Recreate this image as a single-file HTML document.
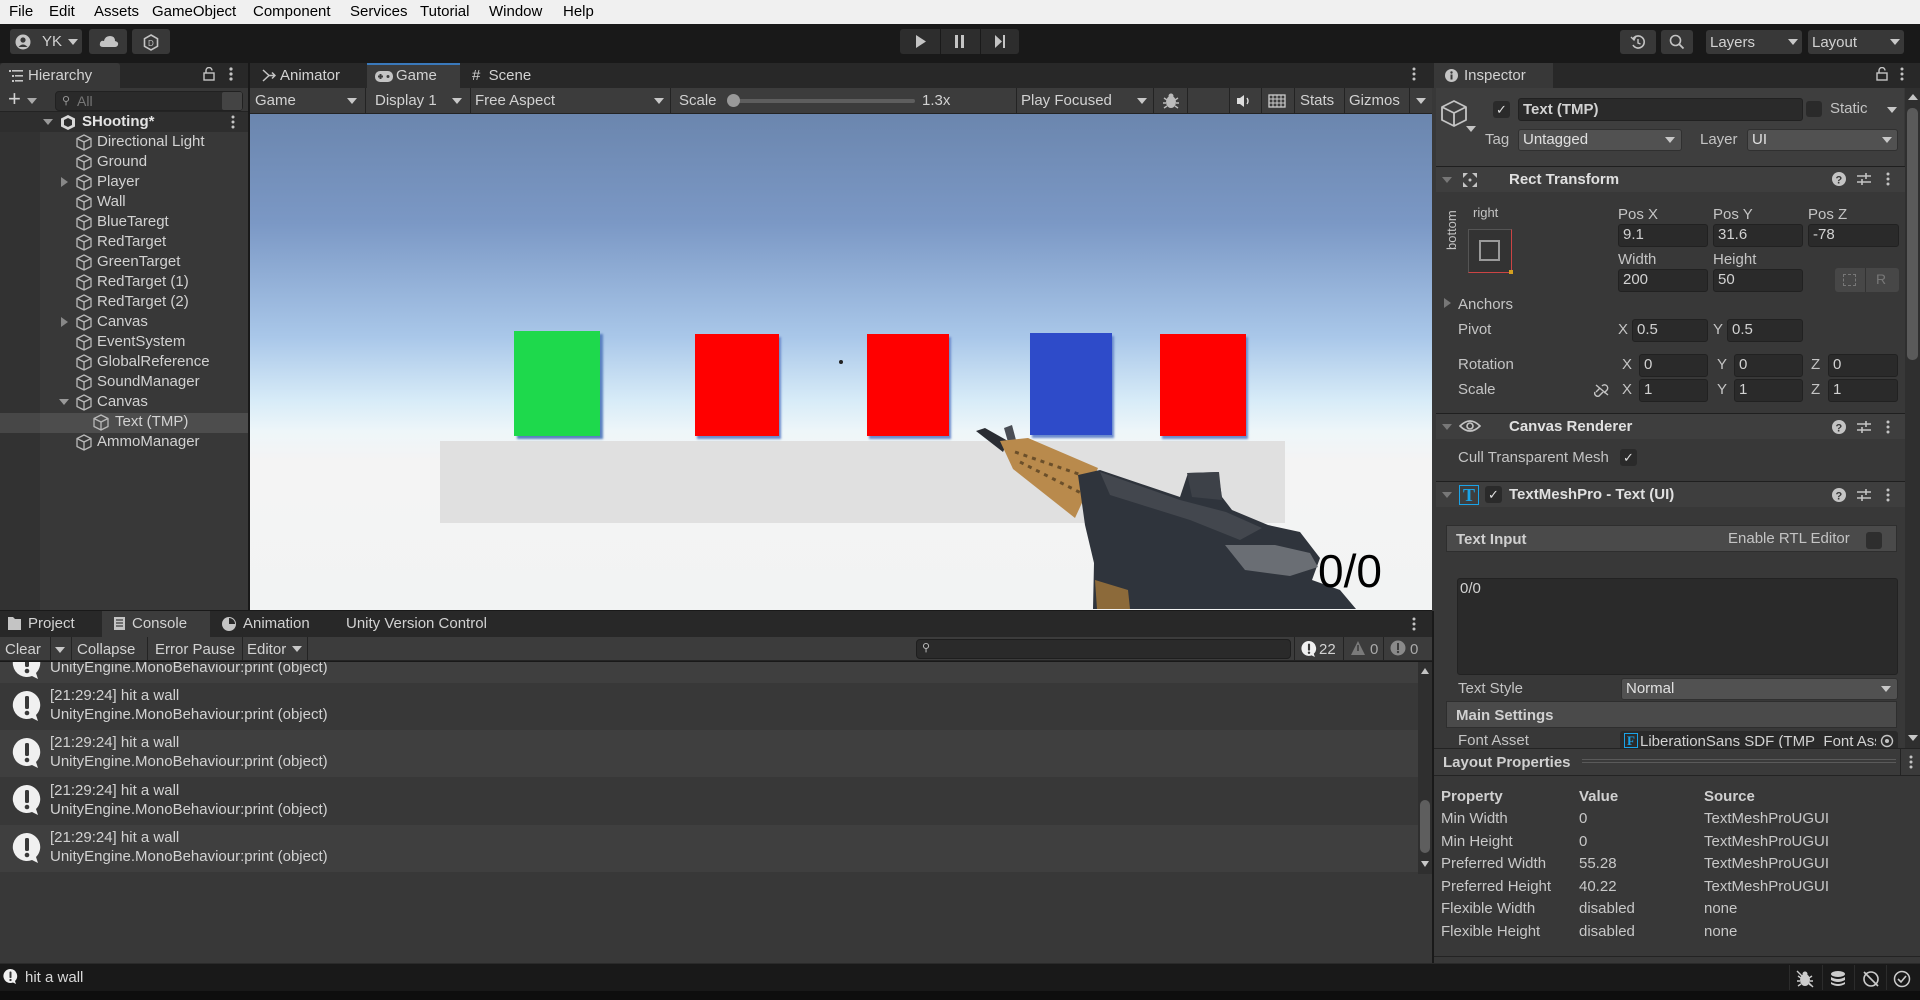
<!DOCTYPE html>
<html><head><meta charset="utf-8">
<style>
*{box-sizing:border-box;margin:0;padding:0}
body{width:1920px;height:1000px;overflow:hidden;background:#191919;font-family:"Liberation Sans",sans-serif;font-size:14px;color:#d2d2d2;position:relative}
.a{position:absolute;white-space:nowrap}
.menu{left:0;top:0;width:1920px;height:24px;background:#f0f0f0;color:#000;font-size:15px}
.menu span{position:absolute;top:3px}
.btn{position:absolute;background:#383838;border-radius:3px}
.tabrow{background:#282828}
.fld{position:absolute;background:#2a2a2a;border:1px solid #212121;border-radius:3px;padding-left:4px;line-height:20px;color:#d2d2d2}
.dd{position:absolute;background:#515151;border:1px solid #303030;border-radius:3px;padding-left:4px;line-height:20px;color:#e0e0e0}
.tri{position:absolute;width:0;height:0;border-left:5px solid transparent;border-right:5px solid transparent;border-top:6px solid #c8c8c8}
.sep{position:absolute;width:1px;background:#232323}
.hdr{position:absolute;left:1436px;width:1466px;height:26px;background:#3e3e3e;border-top:1px solid #1f1f1f}
.lbl{position:absolute;color:#c4c4c4}
</style></head><body>

<!-- menu -->
<div class="a menu">
<span style="left:9px">File</span><span style="left:49px">Edit</span><span style="left:94px">Assets</span><span style="left:152px">GameObject</span><span style="left:253px">Component</span><span style="left:350px">Services</span><span style="left:420px">Tutorial</span><span style="left:489px">Window</span><span style="left:563px">Help</span>
</div>

<!-- toolbar -->
<div class="btn" style="left:10px;top:29px;width:72px;height:25px"></div>
<svg class="a" style="left:15px;top:34px" width="16" height="16"><circle cx="8" cy="8" r="7.5" fill="#c4c4c4"/><circle cx="8" cy="6" r="2.6" fill="#383838"/><path d="M3.5 13 Q8 8 12.5 13" fill="#383838"/></svg>
<div class="a" style="left:42px;top:33px;font-size:15px">YK</div>
<div class="tri" style="left:68px;top:39px"></div>
<div class="btn" style="left:89px;top:29px;width:38px;height:25px"></div>
<svg class="a" style="left:99px;top:34px" width="20" height="14"><path d="M4 13 Q0 13 1 9 Q2 6 5 7 Q6 2 11 2 Q16 2 16 7 Q20 8 19 11 Q18 13 16 13Z" fill="#c4c4c4"/></svg>
<div class="btn" style="left:132px;top:29px;width:38px;height:25px"></div>
<svg class="a" style="left:143px;top:34px" width="16" height="17"><path d="M8 1 L14.5 4.7 L14.5 12.3 L8 16 L1.5 12.3 L1.5 4.7Z" fill="none" stroke="#c4c4c4" stroke-width="1.6"/><text x="5" y="12" font-size="8" fill="#c4c4c4" font-family="Liberation Sans">D</text></svg>

<div class="btn" style="left:900px;top:29px;width:119px;height:25px;background:#2d2d2d"></div>
<div class="sep" style="left:940px;top:29px;height:25px;background:#1a1a1a"></div>
<div class="sep" style="left:980px;top:29px;height:25px;background:#1a1a1a"></div>
<svg class="a" style="left:914px;top:34px" width="14" height="15"><path d="M2 1 L12 7.5 L2 14Z" fill="#c4c4c4"/></svg>
<svg class="a" style="left:953px;top:34px" width="14" height="15"><rect x="2" y="1" width="3" height="13" fill="#c4c4c4"/><rect x="8" y="1" width="3" height="13" fill="#c4c4c4"/></svg>
<svg class="a" style="left:993px;top:34px" width="14" height="15"><path d="M2 1 L9 7.5 L2 14Z" fill="#c4c4c4"/><rect x="10" y="1" width="2" height="13" fill="#c4c4c4"/></svg>

<div class="btn" style="left:1620px;top:30px;width:36px;height:24px"></div>
<svg class="a" style="left:1630px;top:34px" width="16" height="16"><path d="M3 5 A6 6 0 1 1 3 11" fill="none" stroke="#c4c4c4" stroke-width="1.6"/><path d="M1 3 L4 6 L6 2" fill="none" stroke="#c4c4c4" stroke-width="1.4"/><path d="M8 5 L8 9 L10.5 10" fill="none" stroke="#c4c4c4" stroke-width="1.4"/></svg>
<div class="btn" style="left:1661px;top:30px;width:32px;height:24px"></div>
<svg class="a" style="left:1669px;top:34px" width="16" height="16"><circle cx="6.5" cy="6.5" r="5" fill="none" stroke="#c4c4c4" stroke-width="1.6"/><path d="M10 10 L14.5 14.5" stroke="#c4c4c4" stroke-width="1.8"/></svg>
<div class="btn" style="left:1706px;top:30px;width:96px;height:24px"></div>
<div class="a" style="left:1710px;top:34px;font-size:15px">Layers</div><div class="tri" style="left:1788px;top:39px"></div>
<div class="btn" style="left:1808px;top:30px;width:96px;height:24px"></div>
<div class="a" style="left:1812px;top:34px;font-size:15px">Layout</div><div class="tri" style="left:1890px;top:39px"></div>

<!-- HIERARCHY -->
<div class="a tabrow" style="left:0;top:63px;width:248px;height:25px"></div>
<div class="a" style="left:0;top:63px;width:120px;height:25px;background:#383838;border-radius:3px 3px 0 0"></div>
<svg class="a" style="left:9px;top:70px" width="14" height="12"><g fill="#c4c4c4"><rect x="0" y="0" width="2" height="2"/><rect x="3" y="0" width="11" height="1.6"/><rect x="3" y="5" width="2" height="2"/><rect x="6" y="5" width="8" height="1.6"/><rect x="3" y="10" width="2" height="2"/><rect x="6" y="10" width="8" height="1.6"/></g></svg>
<div class="a" style="left:28px;top:67px;font-size:15px">Hierarchy</div>
<svg class="a" style="left:203px;top:67px" width="12" height="14"><rect x="1" y="6" width="10" height="7" fill="none" stroke="#c4c4c4" stroke-width="1.4"/><path d="M3 6 V3.5 A3 3 0 0 1 9 3.5" fill="none" stroke="#c4c4c4" stroke-width="1.4"/></svg>
<svg class="a" style="left:229px;top:67px" width="4" height="14"><circle cx="2" cy="2" r="1.6" fill="#c4c4c4"/><circle cx="2" cy="7" r="1.6" fill="#c4c4c4"/><circle cx="2" cy="12" r="1.6" fill="#c4c4c4"/></svg>
<div class="a" style="left:0;top:88px;width:248px;height:24px;background:#383838;border-bottom:1px solid #232323"></div>
<div class="a" style="left:8px;top:86px;font-size:22px;color:#d2d2d2">+</div><div class="tri" style="left:27px;top:98px;border-top-color:#aaa"></div>
<div class="a" style="left:55px;top:91px;width:188px;height:20px;background:#2a2a2a;border:1px solid #212121;border-radius:4px"></div>
<div class="a" style="left:62px;top:94px;font-size:11px;color:#999">&#9906;</div>
<div class="a" style="left:77px;top:93px;color:#777">All</div>
<div class="a" style="left:222px;top:92px;width:20px;height:18px;background:#444;border-radius:2px"></div>
<div class="a" style="left:0;top:112px;width:248px;height:498px;background:#383838"></div>
<div class="a" style="left:0;top:112px;width:248px;height:20px;background:#2e2e2e"></div>
<div class="a" style="left:0;top:132px;width:40px;height:478px;background:#323232"></div>
<div class="a" style="left:40px;top:413px;width:208px;height:20px;background:#4d4d4d"></div>
<div class="a" style="left:0;top:413px;width:40px;height:20px;background:#474747"></div>
<div class="tri" style="left:43px;top:119px;border-top-color:#999"></div>
<svg class="a" style="left:60px;top:114px" width="16" height="17"><path d="M8 1 L15 4.5 L15 12.5 L8 16 L1 12.5 L1 4.5Z" fill="#d8d8d8"/><path d="M8 4 L12 6 V11 L8 13 L4 11 V6Z" fill="#2e2e2e"/></svg>
<div class="a" style="left:82px;top:113px;font-size:15px;font-weight:bold;color:#e4e4e4">SHooting*</div>
<svg class="a" style="left:231px;top:115px" width="4" height="14"><circle cx="2" cy="2" r="1.5" fill="#c4c4c4"/><circle cx="2" cy="7" r="1.5" fill="#c4c4c4"/><circle cx="2" cy="12" r="1.5" fill="#c4c4c4"/></svg>

<svg width="0" height="0" style="position:absolute"><defs><symbol id="cube" viewBox="0 0 16 17"><path d="M8 1 L15 4.5 L15 12.5 L8 16 L1 12.5 L1 4.5Z M1 4.5 L8 8 L15 4.5 M8 8 V16" fill="none" stroke="#b8b8b8" stroke-width="1.3" stroke-linejoin="round"/></symbol>
<symbol id="msg" viewBox="0 0 30 32"><path d="M15 1 A14 14 0 1 0 20 28 L26 31 L24 25 A14 14 0 0 0 15 1Z" fill="#f0f0f0"/><rect x="13" y="6" width="4" height="13" rx="1.5" fill="#383838"/><circle cx="15" cy="23" r="2.3" fill="#383838"/></symbol></defs></svg>

<div id="hier"></div>
<!-- rows -->
<svg class="a" style="left:76px;top:134px" width="16" height="17"><use href="#cube"/></svg><div class="a" style="left:97px;top:133px;font-size:15px">Directional Light</div>
<svg class="a" style="left:76px;top:154px" width="16" height="17"><use href="#cube"/></svg><div class="a" style="left:97px;top:153px;font-size:15px">Ground</div>
<div class="a" style="left:61px;top:173px;width:0;height:0;border-top:5px solid transparent;border-bottom:5px solid transparent;border-left:7px solid #888;margin-top:4px"></div>
<svg class="a" style="left:76px;top:174px" width="16" height="17"><use href="#cube"/></svg><div class="a" style="left:97px;top:173px;font-size:15px">Player</div>
<svg class="a" style="left:76px;top:194px" width="16" height="17"><use href="#cube"/></svg><div class="a" style="left:97px;top:193px;font-size:15px">Wall</div>
<svg class="a" style="left:76px;top:214px" width="16" height="17"><use href="#cube"/></svg><div class="a" style="left:97px;top:213px;font-size:15px">BlueTaregt</div>
<svg class="a" style="left:76px;top:234px" width="16" height="17"><use href="#cube"/></svg><div class="a" style="left:97px;top:233px;font-size:15px">RedTarget</div>
<svg class="a" style="left:76px;top:254px" width="16" height="17"><use href="#cube"/></svg><div class="a" style="left:97px;top:253px;font-size:15px">GreenTarget</div>
<svg class="a" style="left:76px;top:274px" width="16" height="17"><use href="#cube"/></svg><div class="a" style="left:97px;top:273px;font-size:15px">RedTarget (1)</div>
<svg class="a" style="left:76px;top:294px" width="16" height="17"><use href="#cube"/></svg><div class="a" style="left:97px;top:293px;font-size:15px">RedTarget (2)</div>
<div class="a" style="left:61px;top:317px;width:0;height:0;border-top:5px solid transparent;border-bottom:5px solid transparent;border-left:7px solid #888"></div>
<svg class="a" style="left:76px;top:314px" width="16" height="17"><use href="#cube"/></svg><div class="a" style="left:97px;top:313px;font-size:15px">Canvas</div>
<svg class="a" style="left:76px;top:334px" width="16" height="17"><use href="#cube"/></svg><div class="a" style="left:97px;top:333px;font-size:15px">EventSystem</div>
<svg class="a" style="left:76px;top:354px" width="16" height="17"><use href="#cube"/></svg><div class="a" style="left:97px;top:353px;font-size:15px">GlobalReference</div>
<svg class="a" style="left:76px;top:374px" width="16" height="17"><use href="#cube"/></svg><div class="a" style="left:97px;top:373px;font-size:15px">SoundManager</div>
<div class="tri" style="left:59px;top:399px;border-top-color:#999"></div>
<svg class="a" style="left:76px;top:394px" width="16" height="17"><use href="#cube"/></svg><div class="a" style="left:97px;top:393px;font-size:15px">Canvas</div>
<svg class="a" style="left:93px;top:414px" width="16" height="17"><use href="#cube"/></svg><div class="a" style="left:115px;top:413px;font-size:15px">Text (TMP)</div>
<svg class="a" style="left:76px;top:434px" width="16" height="17"><use href="#cube"/></svg><div class="a" style="left:97px;top:433px;font-size:15px">AmmoManager</div>

<!-- GAME VIEW -->
<div class="a tabrow" style="left:250px;top:63px;width:1182px;height:25px"></div>
<svg class="a" style="left:262px;top:69px" width="14" height="13"><path d="M1 1 L7 6.5 L1 12 M7 6.5 H13 M10 3.5 L13 6.5 L10 9.5" fill="none" stroke="#c4c4c4" stroke-width="1.5"/></svg>
<div class="a" style="left:280px;top:67px;font-size:15px">Animator</div>
<div class="a" style="left:367px;top:63px;width:93px;height:25px;background:#3c3c3c;border-top:2px solid #3a79bb"></div>
<svg class="a" style="left:375px;top:71px" width="18" height="11"><rect x="0" y="0" width="18" height="11" rx="5" fill="#c4c4c4"/><rect x="3" y="4.5" width="5" height="2" fill="#3c3c3c"/><rect x="4.5" y="3" width="2" height="5" fill="#3c3c3c"/><circle cx="13" cy="5.5" r="1.5" fill="#3c3c3c"/></svg>
<div class="a" style="left:396px;top:67px;font-size:15px">Game</div>
<div class="a" style="left:472px;top:67px;font-size:15px">#&nbsp;&nbsp;Scene</div>
<svg class="a" style="left:1412px;top:67px" width="4" height="14"><circle cx="2" cy="2" r="1.5" fill="#c4c4c4"/><circle cx="2" cy="7" r="1.5" fill="#c4c4c4"/><circle cx="2" cy="12" r="1.5" fill="#c4c4c4"/></svg>
<div class="a" style="left:250px;top:88px;width:1182px;height:26px;background:#3c3c3c;border-bottom:1px solid #232323"></div>
<div class="a" style="left:255px;top:92px;font-size:15px">Game</div><div class="tri" style="left:347px;top:98px"></div>
<div class="sep" style="left:365px;top:88px;height:25px"></div>
<div class="a" style="left:375px;top:92px;font-size:15px">Display 1</div><div class="tri" style="left:452px;top:98px"></div>
<div class="sep" style="left:470px;top:88px;height:25px"></div>
<div class="a" style="left:475px;top:92px;font-size:15px">Free Aspect</div><div class="tri" style="left:654px;top:98px"></div>
<div class="sep" style="left:670px;top:88px;height:25px"></div>
<div class="a" style="left:679px;top:92px;font-size:15px">Scale</div>
<div class="a" style="left:735px;top:99px;width:180px;height:4px;background:#5e5e5e;border-radius:2px"></div>
<div class="a" style="left:727px;top:94px;width:13px;height:13px;background:#999;border-radius:50%"></div>
<div class="a" style="left:922px;top:92px;font-size:15px">1.3x</div>
<div class="sep" style="left:1016px;top:88px;height:25px"></div>
<div class="a" style="left:1021px;top:92px;font-size:15px">Play Focused</div><div class="tri" style="left:1137px;top:98px"></div>
<div class="sep" style="left:1153px;top:88px;height:25px"></div>
<svg class="a" style="left:1162px;top:92px" width="18" height="18"><ellipse cx="9" cy="10" rx="5" ry="6" fill="#bbb"/><circle cx="9" cy="4" r="2.5" fill="#bbb"/><path d="M2 6 L5 8 M16 6 L13 8 M1 11 H4 M17 11 H14 M2 16 L5 14 M16 16 L13 14" stroke="#bbb" stroke-width="1.4"/></svg>
<div class="sep" style="left:1187px;top:88px;height:25px"></div>
<div class="sep" style="left:1229px;top:88px;height:25px"></div>
<svg class="a" style="left:1236px;top:94px" width="16" height="14"><path d="M1 4 H4 L8 1 V13 L4 10 H1Z" fill="#ddd"/><path d="M11 4 Q13 7 11 10" fill="none" stroke="#ddd" stroke-width="1.4"/></svg>
<div class="sep" style="left:1261px;top:88px;height:25px"></div>
<svg class="a" style="left:1268px;top:94px" width="18" height="14"><rect x="1" y="1" width="16" height="12" fill="none" stroke="#ccc" stroke-width="1.3"/><path d="M1 5 H17 M1 9 H17 M5 1 V13 M9 1 V13 M13 1 V13" stroke="#ccc" stroke-width="1"/></svg>
<div class="sep" style="left:1294px;top:88px;height:25px"></div>
<div class="a" style="left:1300px;top:92px;font-size:15px">Stats</div>
<div class="sep" style="left:1344px;top:88px;height:25px"></div>
<div class="a" style="left:1349px;top:92px;font-size:15px">Gizmos</div>
<div class="sep" style="left:1409px;top:88px;height:25px"></div>
<div class="tri" style="left:1416px;top:98px"></div>

<!-- scene -->
<div class="a" style="left:250px;top:114px;width:1182px;height:496px;background:linear-gradient(#6b86ae 0%,#7b98c5 22%,#a9c7e9 45%,#d8ecf8 58%,#eef6f9 64%,#f4f4f4 70%,#f2f3f3 100%);overflow:hidden">
 <div class="a" style="left:190px;top:327px;width:845px;height:82px;background:#e0e0e0"></div>
 <div class="a" style="left:264px;top:217px;width:86px;height:105px;background:#1ed94c;box-shadow:3px 3px 2px #5a80c0"></div>
 <div class="a" style="left:445px;top:220px;width:84px;height:102px;background:#ff0000;box-shadow:2px 3px 2px #6a8acc"></div>
 <div class="a" style="left:617px;top:220px;width:82px;height:102px;background:#ff0000;box-shadow:2px 3px 2px #6a8acc"></div>
 <div class="a" style="left:780px;top:219px;width:82px;height:102px;background:#2e4bc9;box-shadow:2px 3px 2px #6a8acc"></div>
 <div class="a" style="left:910px;top:220px;width:86px;height:102px;background:#ff0000;box-shadow:2px 3px 2px #6a8acc"></div>
 <div class="a" style="left:589px;top:246px;width:4px;height:4px;background:#222;border-radius:50%"></div>
 <svg class="a" style="left:0;top:0" width="1182" height="496">
  <g transform="translate(-250,-114)">
   <path d="M976 431 L985 428 L1008 441 L1003 452Z" fill="#2a2d33"/>
   <path d="M1004 428 L1012 425 L1016 440 L1008 442Z" fill="#4a4e55"/>
   <path d="M1000 441 L1028 438 L1098 468 L1075 518 L1013 469Z" fill="#b98a4c"/>
   <path d="M1015 452 L1090 478 M1020 462 L1083 494" stroke="#6b4f2a" stroke-width="3" stroke-dasharray="4 5"/>
   <path d="M1078 475 L1100 470 L1180 497 L1188 473 L1218 472 L1222 497 L1232 510 L1268 525 L1300 532 L1320 558 L1312 580 L1340 590 L1356 609 L1093 609 L1094 563 L1085 525Z" fill="#2f343c"/>
   <path d="M1100 472 L1180 500 L1226 512 L1262 528 L1240 540 L1190 520 L1110 495Z" fill="#43474e"/>
   <path d="M1225 545 L1275 545 L1310 553 L1318 567 L1290 576 L1245 570Z" fill="#6a6e74"/>
   <path d="M1187 473 L1219 472 L1222 500 L1192 497Z" fill="#3d4148"/>
   <path d="M1095 580 L1128 590 L1130 609 L1097 609Z" fill="#8c6a3a"/>
  </g>
 </svg>
 <div class="a" style="left:1068px;top:430px;font-size:46px;color:#000">0/0</div>
</div>

<!-- INSPECTOR -->
<div class="a" style="left:1432px;top:63px;width:488px;height:902px;background:#383838"></div>
<div class="a tabrow" style="left:1432px;top:63px;width:488px;height:25px"></div>
<div class="a" style="left:1434px;top:63px;width:119px;height:25px;background:#383838"></div>
<svg class="a" style="left:1445px;top:69px" width="13" height="13"><circle cx="6.5" cy="6.5" r="6.5" fill="#c4c4c4"/><rect x="5.5" y="5.5" width="2" height="5" fill="#383838"/><circle cx="6.5" cy="3.5" r="1.2" fill="#383838"/></svg>
<div class="a" style="left:1464px;top:67px;font-size:15px">Inspector</div>
<svg class="a" style="left:1876px;top:67px" width="12" height="14"><rect x="1" y="6" width="10" height="7" fill="none" stroke="#c4c4c4" stroke-width="1.4"/><path d="M3 6 V3.5 A3 3 0 0 1 9 3.5" fill="none" stroke="#c4c4c4" stroke-width="1.4"/></svg>
<svg class="a" style="left:1900px;top:67px" width="4" height="14"><circle cx="2" cy="2" r="1.5" fill="#c4c4c4"/><circle cx="2" cy="7" r="1.5" fill="#c4c4c4"/><circle cx="2" cy="12" r="1.5" fill="#c4c4c4"/></svg>
<div class="a" style="left:1436px;top:88px;width:468px;height:78px;background:#3e3e3e"></div>
<svg class="a" style="left:1441px;top:99px" width="30" height="30"><path d="M13 2 L25 8 L25 21 L13 27 L1 21 L1 8Z M1 8 L13 14 L25 8 M13 14 V27" fill="none" stroke="#c4c4c4" stroke-width="1.8" stroke-linejoin="round"/></svg>
<div class="tri" style="left:1466px;top:126px;border-top-color:#c4c4c4"></div>
<div class="a" style="left:1493px;top:101px;width:17px;height:17px;background:#2a2a2a;border-radius:3px;color:#e0e0e0;font-size:13px;text-align:center;line-height:17px">&#10003;</div>
<div class="fld" style="left:1518px;top:98px;width:285px;height:23px;font-size:15px;font-weight:bold;line-height:21px">Text (TMP)</div>
<div class="a" style="left:1806px;top:101px;width:16px;height:16px;background:#2a2a2a;border-radius:3px"></div>
<div class="lbl" style="left:1830px;top:100px;font-size:15px">Static</div><div class="tri" style="left:1887px;top:107px"></div>
<div class="lbl" style="left:1485px;top:131px;font-size:15px">Tag</div>
<div class="dd" style="left:1518px;top:129px;width:164px;height:22px;font-size:15px">Untagged</div><div class="tri" style="left:1665px;top:137px"></div>
<div class="lbl" style="left:1700px;top:131px;font-size:15px">Layer</div>
<div class="dd" style="left:1747px;top:129px;width:151px;height:22px;font-size:15px">UI</div><div class="tri" style="left:1882px;top:137px"></div>

<div class="hdr" style="top:166px"></div>
<div class="tri" style="left:1442px;top:177px;border-top-color:#777"></div>
<svg class="a" style="left:1462px;top:172px" width="16" height="16"><g fill="#c4c4c4"><path d="M1 1 L6 1 L1 6Z"/><path d="M15 1 L10 1 L15 6Z"/><path d="M1 15 L6 15 L1 10Z"/><path d="M15 15 L10 15 L15 10Z"/><circle cx="8" cy="8" r="1.5"/></g></svg>
<div class="a" style="left:1509px;top:171px;font-size:15px;font-weight:bold;color:#e0e0e0">Rect Transform</div>
<svg class="a" style="left:1832px;top:172px" width="14" height="14"><circle cx="7" cy="7" r="7" fill="#c4c4c4"/><text x="3.5" y="11.5" font-size="11" font-weight="bold" fill="#383838" font-family="Liberation Sans">?</text></svg>
<svg class="a" style="left:1857px;top:172px" width="14" height="14"><path d="M0 4 H14 M0 10 H14 M9 1 V7 M5 7 V13" stroke="#c4c4c4" stroke-width="1.6"/></svg>
<svg class="a" style="left:1886px;top:172px" width="4" height="14"><circle cx="2" cy="2" r="1.5" fill="#c4c4c4"/><circle cx="2" cy="7" r="1.5" fill="#c4c4c4"/><circle cx="2" cy="12" r="1.5" fill="#c4c4c4"/></svg>

<div class="lbl" style="left:1473px;top:205px;font-size:13px">right</div>
<div class="lbl" style="left:1444px;top:250px;font-size:13px;transform:rotate(-90deg);transform-origin:left top">bottom</div>
<div class="a" style="left:1468px;top:229px;width:44px;height:44px;border:1px solid #555;border-right:1px solid #c44;border-bottom:1px solid #c44;background:#333"></div>
<div class="a" style="left:1479px;top:240px;width:21px;height:21px;border:2px solid #999"></div>
<div class="a" style="left:1509px;top:270px;width:4px;height:4px;background:#d4a020"></div>
<div class="lbl" style="left:1618px;top:206px;font-size:15px">Pos X</div>
<div class="lbl" style="left:1713px;top:206px;font-size:15px">Pos Y</div>
<div class="lbl" style="left:1808px;top:206px;font-size:15px">Pos Z</div>
<div class="fld" style="left:1618px;top:224px;width:90px;height:23px;font-size:15px">9.1</div>
<div class="fld" style="left:1713px;top:224px;width:90px;height:23px;font-size:15px">31.6</div>
<div class="fld" style="left:1808px;top:224px;width:91px;height:23px;font-size:15px">-78</div>
<div class="lbl" style="left:1618px;top:251px;font-size:15px">Width</div>
<div class="lbl" style="left:1713px;top:251px;font-size:15px">Height</div>
<div class="fld" style="left:1618px;top:269px;width:90px;height:23px;font-size:15px">200</div>
<div class="fld" style="left:1713px;top:269px;width:90px;height:23px;font-size:15px">50</div>
<div class="a" style="left:1835px;top:268px;width:64px;height:24px;background:#474747;border-radius:3px"></div>
<div class="a" style="left:1865px;top:268px;width:1px;height:24px;background:#333"></div>
<div class="a" style="left:1843px;top:274px;width:13px;height:12px;border:1px dashed #777"></div>
<div class="a" style="left:1876px;top:271px;font-size:14px;color:#777">R</div>
<div class="a" style="left:1444px;top:298px;width:0;height:0;border-top:5px solid transparent;border-bottom:5px solid transparent;border-left:7px solid #777"></div>
<div class="lbl" style="left:1458px;top:296px;font-size:15px">Anchors</div>
<div class="lbl" style="left:1458px;top:321px;font-size:15px">Pivot</div>
<div class="lbl" style="left:1618px;top:321px;font-size:15px">X</div>
<div class="fld" style="left:1632px;top:319px;width:76px;height:23px;font-size:15px">0.5</div>
<div class="lbl" style="left:1713px;top:321px;font-size:15px">Y</div>
<div class="fld" style="left:1727px;top:319px;width:76px;height:23px;font-size:15px">0.5</div>
<div class="lbl" style="left:1458px;top:356px;font-size:15px">Rotation</div>
<div class="lbl" style="left:1622px;top:356px;font-size:15px">X</div><div class="fld" style="left:1639px;top:354px;width:69px;height:23px;font-size:15px">0</div>
<div class="lbl" style="left:1717px;top:356px;font-size:15px">Y</div><div class="fld" style="left:1734px;top:354px;width:69px;height:23px;font-size:15px">0</div>
<div class="lbl" style="left:1811px;top:356px;font-size:15px">Z</div><div class="fld" style="left:1828px;top:354px;width:70px;height:23px;font-size:15px">0</div>
<div class="lbl" style="left:1458px;top:381px;font-size:15px">Scale</div>
<svg class="a" style="left:1594px;top:383px" width="16" height="14"><path d="M2 9 L6 5 M9 9 L5 13 A3 3 0 0 1 1 9 M8 3 A3 3 0 0 1 13 7 L10 10 M2 2 L14 12" fill="none" stroke="#c4c4c4" stroke-width="1.4"/></svg>
<div class="lbl" style="left:1622px;top:381px;font-size:15px">X</div><div class="fld" style="left:1639px;top:379px;width:69px;height:23px;font-size:15px">1</div>
<div class="lbl" style="left:1717px;top:381px;font-size:15px">Y</div><div class="fld" style="left:1734px;top:379px;width:69px;height:23px;font-size:15px">1</div>
<div class="lbl" style="left:1811px;top:381px;font-size:15px">Z</div><div class="fld" style="left:1828px;top:379px;width:70px;height:23px;font-size:15px">1</div>

<div class="hdr" style="top:413px"></div>
<div class="tri" style="left:1442px;top:424px;border-top-color:#777"></div>
<svg class="a" style="left:1459px;top:419px" width="22" height="14"><path d="M1 7 Q11 -3 21 7 Q11 17 1 7Z" fill="none" stroke="#c4c4c4" stroke-width="1.6"/><circle cx="11" cy="7" r="3" fill="none" stroke="#c4c4c4" stroke-width="1.6"/></svg>
<div class="a" style="left:1509px;top:418px;font-size:15px;font-weight:bold;color:#e0e0e0">Canvas Renderer</div>
<svg class="a" style="left:1832px;top:420px" width="14" height="14"><circle cx="7" cy="7" r="7" fill="#c4c4c4"/><text x="3.5" y="11.5" font-size="11" font-weight="bold" fill="#383838" font-family="Liberation Sans">?</text></svg>
<svg class="a" style="left:1857px;top:420px" width="14" height="14"><path d="M0 4 H14 M0 10 H14 M9 1 V7 M5 7 V13" stroke="#c4c4c4" stroke-width="1.6"/></svg>
<svg class="a" style="left:1886px;top:420px" width="4" height="14"><circle cx="2" cy="2" r="1.5" fill="#c4c4c4"/><circle cx="2" cy="7" r="1.5" fill="#c4c4c4"/><circle cx="2" cy="12" r="1.5" fill="#c4c4c4"/></svg>
<div class="lbl" style="left:1458px;top:449px;font-size:15px;width:160px;overflow:hidden">Cull Transparent Mesh</div>
<div class="a" style="left:1620px;top:449px;width:17px;height:17px;background:#2a2a2a;border-radius:3px;color:#e0e0e0;font-size:13px;text-align:center;line-height:17px">&#10003;</div>

<div class="hdr" style="top:481px"></div>
<div class="tri" style="left:1442px;top:492px;border-top-color:#777"></div>
<div class="a" style="left:1459px;top:485px;width:20px;height:20px;border:1px solid #1aa3e8;color:#1aa3e8;font-family:'Liberation Serif',serif;font-weight:bold;font-size:18px;text-align:center;line-height:19px">T</div>
<div class="a" style="left:1485px;top:486px;width:17px;height:17px;background:#2a2a2a;border-radius:3px;color:#e0e0e0;font-size:13px;text-align:center;line-height:17px">&#10003;</div>
<div class="a" style="left:1509px;top:486px;font-size:15px;font-weight:bold;color:#e0e0e0">TextMeshPro - Text (UI)</div>
<svg class="a" style="left:1832px;top:488px" width="14" height="14"><circle cx="7" cy="7" r="7" fill="#c4c4c4"/><text x="3.5" y="11.5" font-size="11" font-weight="bold" fill="#383838" font-family="Liberation Sans">?</text></svg>
<svg class="a" style="left:1857px;top:488px" width="14" height="14"><path d="M0 4 H14 M0 10 H14 M9 1 V7 M5 7 V13" stroke="#c4c4c4" stroke-width="1.6"/></svg>
<svg class="a" style="left:1886px;top:488px" width="4" height="14"><circle cx="2" cy="2" r="1.5" fill="#c4c4c4"/><circle cx="2" cy="7" r="1.5" fill="#c4c4c4"/><circle cx="2" cy="12" r="1.5" fill="#c4c4c4"/></svg>
<div class="a" style="left:1446px;top:525px;width:451px;height:27px;background:#4a4a4a;border:1px solid #2e2e2e"></div>
<div class="a" style="left:1456px;top:531px;font-size:15px;font-weight:bold;color:#d0d0d0">Text Input</div>
<div class="lbl" style="left:1728px;top:530px;font-size:15px">Enable RTL Editor</div>
<div class="a" style="left:1866px;top:532px;width:16px;height:17px;background:#2e2e2e;border-radius:3px"></div>
<div class="a" style="left:1457px;top:578px;width:441px;height:97px;background:#2a2a2a;border:1px solid #222;border-radius:3px"></div>
<div class="a" style="left:1460px;top:580px;font-size:15px">0/0</div>
<div class="lbl" style="left:1458px;top:680px;font-size:15px">Text Style</div>
<div class="dd" style="left:1621px;top:678px;width:277px;height:22px;font-size:15px">Normal</div><div class="tri" style="left:1881px;top:686px"></div>
<div class="a" style="left:1446px;top:701px;width:451px;height:27px;background:#4a4a4a;border:1px solid #2e2e2e"></div>
<div class="a" style="left:1456px;top:707px;font-size:15px;font-weight:bold;color:#d0d0d0">Main Settings</div>
<div class="a" style="left:1436px;top:730px;width:468px;height:18px;overflow:hidden">
 <div class="lbl" style="left:22px;top:2px;font-size:15px">Font Asset</div>
 <div class="a" style="left:184px;top:1px;width:278px;height:22px;background:#2a2a2a;border-radius:3px"></div>
 <div class="a" style="left:188px;top:3px;width:14px;height:15px;border:1px solid #1aa3e8;color:#1aa3e8;font-family:'Liberation Serif',serif;font-weight:bold;font-size:13px;line-height:13px;text-align:center">F</div>
 <div class="a" style="left:204px;top:3px;font-size:15px;width:236px;overflow:hidden">LiberationSans SDF (TMP_Font Asset)</div>
 <svg class="a" style="left:444px;top:4px" width="14" height="14"><circle cx="7" cy="7" r="5.5" fill="none" stroke="#c4c4c4" stroke-width="1.4"/><circle cx="7" cy="7" r="2" fill="#c4c4c4"/></svg>
</div>
<div class="a" style="left:1905px;top:88px;width:15px;height:660px;background:#2f2f2f"></div>
<div class="a" style="left:1907px;top:108px;width:11px;height:252px;background:#5a5a5a;border-radius:5px"></div>
<div class="a" style="left:1908px;top:94px;width:0;height:0;border-left:5px solid transparent;border-right:5px solid transparent;border-bottom:6px solid #c4c4c4"></div>
<div class="tri" style="left:1908px;top:735px"></div>
<!-- layout properties -->
<div class="a" style="left:1434px;top:748px;width:486px;height:28px;background:#3a3a3a;border-top:1px solid #232323;border-bottom:1px solid #232323"></div>
<div class="a" style="left:1443px;top:754px;font-size:15px;font-weight:bold;color:#d0d0d0">Layout Properties</div>
<div class="a" style="left:1582px;top:759px;width:314px;height:4px;border-top:1px solid #5a5a5a;border-bottom:1px solid #5a5a5a"></div>
<div class="a" style="left:1900px;top:748px;width:1px;height:28px;background:#232323"></div>
<svg class="a" style="left:1909px;top:755px" width="4" height="14"><circle cx="2" cy="2" r="1.5" fill="#c4c4c4"/><circle cx="2" cy="7" r="1.5" fill="#c4c4c4"/><circle cx="2" cy="12" r="1.5" fill="#c4c4c4"/></svg>
<div class="a" style="left:1434px;top:777px;width:486px;height:180px;background:#383838"></div>
<div class="a" style="left:1441px;top:785px;font-size:15px;font-weight:bold;line-height:23px;color:#d0d0d0">Property</div>
<div class="a" style="left:1579px;top:785px;font-size:15px;font-weight:bold;line-height:23px;color:#d0d0d0">Value</div>
<div class="a" style="left:1704px;top:785px;font-size:15px;font-weight:bold;line-height:23px;color:#d0d0d0">Source</div>
<div class="a" style="left:1441px;top:808px;font-size:15px;line-height:22.5px;color:#c8c8c8">Min Width<br>Min Height<br>Preferred Width<br>Preferred Height<br>Flexible Width<br>Flexible Height</div>
<div class="a" style="left:1579px;top:808px;font-size:15px;line-height:22.5px;color:#c8c8c8">0<br>0<br>55.28<br>40.22<br>disabled<br>disabled</div>
<div class="a" style="left:1704px;top:808px;font-size:15px;line-height:22.5px;color:#c8c8c8">TextMeshProUGUI<br>TextMeshProUGUI<br>TextMeshProUGUI<br>TextMeshProUGUI<br>none<br>none</div>
<div class="a" style="left:1434px;top:956px;width:486px;height:8px;background:#383838;border-top:1px solid #232323"></div>

<!-- BOTTOM CONSOLE -->
<div class="a tabrow" style="left:0;top:611px;width:1432px;height:26px"></div>
<svg class="a" style="left:8px;top:617px" width="13" height="13"><path d="M0 0 H5 L7 2 H13 V13 H0Z" fill="#c4c4c4"/></svg>
<div class="a" style="left:28px;top:615px;font-size:15px">Project</div>
<div class="a" style="left:102px;top:611px;width:108px;height:26px;background:#3c3c3c"></div>
<svg class="a" style="left:114px;top:617px" width="11" height="13"><rect x="0" y="0" width="11" height="13" fill="#c4c4c4"/><path d="M2 3 H9 M2 6 H9 M2 9 H9" stroke="#3c3c3c" stroke-width="1.2"/></svg>
<div class="a" style="left:132px;top:615px;font-size:15px">Console</div>
<svg class="a" style="left:222px;top:617px" width="14" height="14"><circle cx="7" cy="7" r="7" fill="#c4c4c4"/><path d="M7 7 V1 A6 6 0 0 1 13 7Z" fill="#282828"/></svg>
<div class="a" style="left:243px;top:615px;font-size:15px">Animation</div>
<div class="a" style="left:346px;top:615px;font-size:15px">Unity Version Control</div>
<svg class="a" style="left:1412px;top:617px" width="4" height="14"><circle cx="2" cy="2" r="1.5" fill="#c4c4c4"/><circle cx="2" cy="7" r="1.5" fill="#c4c4c4"/><circle cx="2" cy="12" r="1.5" fill="#c4c4c4"/></svg>
<div class="a" style="left:0;top:637px;width:1432px;height:24px;background:#3c3c3c;border-bottom:1px solid #232323"></div>
<div class="a" style="left:5px;top:641px;font-size:15px">Clear</div>
<div class="sep" style="left:50px;top:637px;height:24px"></div><div class="tri" style="left:55px;top:647px"></div>
<div class="sep" style="left:71px;top:637px;height:24px"></div>
<div class="a" style="left:77px;top:641px;font-size:15px">Collapse</div>
<div class="sep" style="left:147px;top:637px;height:24px"></div>
<div class="a" style="left:155px;top:641px;font-size:15px">Error Pause</div>
<div class="sep" style="left:242px;top:637px;height:24px"></div>
<div class="a" style="left:247px;top:641px;font-size:15px">Editor</div><div class="tri" style="left:292px;top:646px"></div>
<div class="sep" style="left:307px;top:637px;height:24px"></div>
<div class="a" style="left:916px;top:639px;width:375px;height:20px;background:#2a2a2a;border:1px solid #1e1e1e;border-radius:4px"></div>
<div class="a" style="left:922px;top:641px;font-size:11px;color:#bbb">&#9906;</div>
<div class="sep" style="left:1294px;top:637px;height:24px"></div>
<svg class="a" style="left:1301px;top:640px" width="16" height="18"><use href="#msg"/></svg>
<div class="a" style="left:1319px;top:641px;font-size:15px">22</div>
<div class="sep" style="left:1343px;top:637px;height:24px"></div>
<svg class="a" style="left:1350px;top:640px" width="16" height="16"><path d="M8 1 L15 15 H1Z" fill="#7a7a7a"/><rect x="7.2" y="5" width="1.6" height="6" fill="#3c3c3c"/></svg>
<div class="a" style="left:1370px;top:641px;font-size:15px;color:#aaa">0</div>
<div class="sep" style="left:1383px;top:637px;height:24px"></div>
<svg class="a" style="left:1390px;top:640px" width="16" height="16"><circle cx="8" cy="8" r="7.5" fill="#8a8a8a"/><rect x="7" y="3" width="2" height="7" fill="#3c3c3c"/><circle cx="8" cy="12" r="1.2" fill="#3c3c3c"/></svg>
<div class="a" style="left:1410px;top:641px;font-size:15px;color:#aaa">0</div>

<div class="a" style="left:0;top:662px;width:1420px;height:302px;background:#383838"></div>
<div class="a" style="left:0;top:662px;width:1420px;height:21px;background:#3f3f3f;overflow:hidden">
 <svg class="a" style="left:12px;top:-14px" width="30" height="32"><use href="#msg"/></svg>
 <div class="a" style="left:50px;top:-3px;font-size:15px">UnityEngine.MonoBehaviour:print (object)</div>
</div>
<div class="a" style="left:0;top:683px;width:1420px;height:47px;background:#383838"></div>
<div class="a" style="left:0;top:730px;width:1420px;height:47px;background:#3f3f3f"></div>
<div class="a" style="left:0;top:777px;width:1420px;height:48px;background:#383838"></div>
<div class="a" style="left:0;top:825px;width:1420px;height:47px;background:#3f3f3f"></div>
<svg class="a" style="left:12px;top:690px" width="30" height="32"><use href="#msg"/></svg>
<div class="a" style="left:50px;top:686px;font-size:15px;line-height:19px">[21:29:24] hit a wall<br>UnityEngine.MonoBehaviour:print (object)</div>
<svg class="a" style="left:12px;top:737px" width="30" height="32"><use href="#msg"/></svg>
<div class="a" style="left:50px;top:733px;font-size:15px;line-height:19px">[21:29:24] hit a wall<br>UnityEngine.MonoBehaviour:print (object)</div>
<svg class="a" style="left:12px;top:784px" width="30" height="32"><use href="#msg"/></svg>
<div class="a" style="left:50px;top:781px;font-size:15px;line-height:19px">[21:29:24] hit a wall<br>UnityEngine.MonoBehaviour:print (object)</div>
<svg class="a" style="left:12px;top:832px" width="30" height="32"><use href="#msg"/></svg>
<div class="a" style="left:50px;top:828px;font-size:15px;line-height:19px">[21:29:24] hit a wall<br>UnityEngine.MonoBehaviour:print (object)</div>
<div class="a" style="left:1418px;top:662px;width:14px;height:212px;background:#2f2f2f"></div>
<div class="a" style="left:1421px;top:668px;width:0;height:0;border-left:4px solid transparent;border-right:4px solid transparent;border-bottom:6px solid #c4c4c4"></div>
<div class="a" style="left:1420px;top:800px;width:10px;height:53px;background:#5e5e5e;border-radius:5px"></div>
<div class="tri" style="left:1421px;top:861px;border-left-width:4px;border-right-width:4px"></div>
<div class="a" style="left:0;top:874px;width:1432px;height:90px;background:#383838"></div>
<div class="a" style="left:1432px;top:611px;width:2px;height:353px;background:#191919"></div>

<!-- status bar -->
<div class="a" style="left:0;top:963px;width:1920px;height:28px;background:#191919;border-top:1px solid #2a2a2a"></div>
<svg class="a" style="left:3px;top:968px" width="15" height="17"><use href="#msg"/></svg>
<div class="a" style="left:25px;top:969px;font-size:15px;color:#d8d8d8">hit a wall</div>
<div class="sep" style="left:1789px;top:965px;height:25px;background:#2c2c2c"></div>
<svg class="a" style="left:1796px;top:970px" width="18" height="18"><ellipse cx="9" cy="10" rx="5" ry="6" fill="#ccc"/><circle cx="9" cy="4" r="2.5" fill="#ccc"/><path d="M2 6 L5 8 M16 6 L13 8 M1 11 H4 M17 11 H14 M2 16 L5 14 M16 16 L13 14 M1 1 L17 17" stroke="#ccc" stroke-width="1.4"/></svg>
<div class="sep" style="left:1822px;top:965px;height:25px;background:#2c2c2c"></div>
<svg class="a" style="left:1829px;top:970px" width="18" height="18"><ellipse cx="9" cy="4" rx="7" ry="3" fill="#ccc"/><path d="M2 7 Q9 11 16 7 V10 Q9 14 2 10Z M2 12 Q9 16 16 12 V14 Q9 18 2 14Z" fill="#ccc"/></svg>
<div class="sep" style="left:1854px;top:965px;height:25px;background:#2c2c2c"></div>
<svg class="a" style="left:1862px;top:970px" width="18" height="18"><circle cx="9" cy="9" r="7" fill="none" stroke="#ccc" stroke-width="1.6"/><path d="M2 2 L16 16" stroke="#ccc" stroke-width="1.6"/></svg>
<div class="sep" style="left:1886px;top:965px;height:25px;background:#2c2c2c"></div>
<svg class="a" style="left:1893px;top:970px" width="18" height="18"><circle cx="9" cy="9" r="7.5" fill="none" stroke="#ccc" stroke-width="1.5"/><path d="M5 9 L8 12 L13 6" fill="none" stroke="#ccc" stroke-width="1.6"/></svg>
<div class="a" style="left:0;top:991px;width:1920px;height:9px;background:#0e0e0e"></div>
</body></html>
